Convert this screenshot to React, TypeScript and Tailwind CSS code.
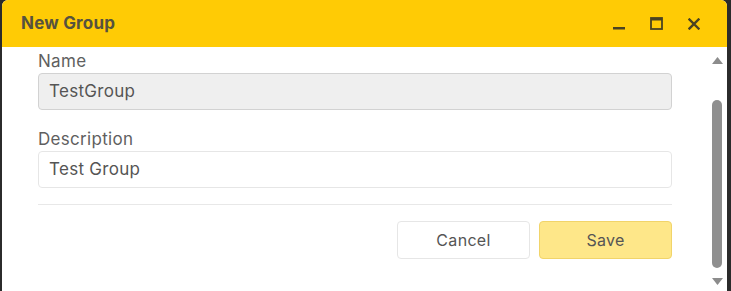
import React from 'react';

const font = { fontFamily: 'Inter, "Open Sans", sans-serif' };

const App: React.FC = () => {
  return (
    <div className="w-[731px] h-[291px] bg-[#2b2b2b] overflow-hidden" style={font}>
      <div className="ml-[2px] w-[725px] h-[291px] bg-white rounded-t-[6px] overflow-hidden flex flex-col">
        {/* Title bar */}
        <div className="h-[47px] shrink-0 bg-[#ffcb05] flex items-center pl-[19px] pr-[27px]">
          <span className="text-[17px] font-bold text-[#56523f] tracking-[0.2px]">New Group</span>
          <div className="ml-auto flex items-center gap-[25px]">
            <svg width="12" height="12" viewBox="0 0 12 12" className="mt-[2px]">
              <rect x="0" y="8" width="12" height="2.5" fill="#4a4322" />
            </svg>
            <svg width="13" height="13" viewBox="0 0 13 13">
              <rect x="1" y="1" width="11" height="11" fill="none" stroke="#4a4322" strokeWidth="1.8" />
              <rect x="1" y="1" width="11" height="2.5" fill="#4a4322" />
            </svg>
            <svg width="12" height="12" viewBox="0 0 12 12">
              <path d="M1.5 1.5 L10.5 10.5 M10.5 1.5 L1.5 10.5" stroke="#4a4322" strokeWidth="2.4" strokeLinecap="square" />
            </svg>
          </div>
        </div>

        {/* Body */}
        <div className="flex flex-1 min-h-0">
          <div className="flex-1 pl-[36px] pr-[36px] pt-[3px] text-[17px] tracking-[0.3px]">
            <label className="block leading-[22px] text-[#5f5f5f]">Name</label>
            <div className="mt-[1px] h-[37px] rounded-[4px] border border-[#d2d2d2] bg-[#efefef] flex items-center px-[10px] text-[#555]">
              TestGroup
            </div>
            <label className="block mt-[18px] leading-[22px] text-[#5f5f5f]">Description</label>
            <div className="mt-[1px] h-[37px] rounded-[4px] border border-[#e6e6e6] bg-white flex items-center px-[10px] text-[#555]">
              Test Group
            </div>
            <div className="mt-[16px] h-px bg-[#e8e8e8]" />
            <div className="mt-[16px] flex justify-end gap-[9px]">
              <button className="w-[133px] h-[38px] rounded-[4px] border border-[#e6e6e6] bg-white text-[16px] text-[#555]">
                Cancel
              </button>
              <button className="w-[133px] h-[38px] rounded-[4px] border border-[#f1d46a] bg-[#fee789] text-[16px] text-[#555]">
                Save
              </button>
            </div>
          </div>

          {/* Scrollbar */}
          <div className="w-[19px] shrink-0 flex flex-col items-center pt-[10px] pb-[6px] pr-[1px]">
            <svg width="11" height="7" viewBox="0 0 11 7">
              <path d="M0 7 L5.5 0 L11 7 Z" fill="#8c8c8c" />
            </svg>
            <div className="mt-[36px] w-[10px] h-[168px] rounded-full bg-[#8f8f8f]" />
            <svg width="11" height="7" viewBox="0 0 11 7" className="mt-auto">
              <path d="M0 0 L11 0 L5.5 7 Z" fill="#8c8c8c" />
            </svg>
          </div>
        </div>
      </div>
    </div>
  );
};

export default App;
